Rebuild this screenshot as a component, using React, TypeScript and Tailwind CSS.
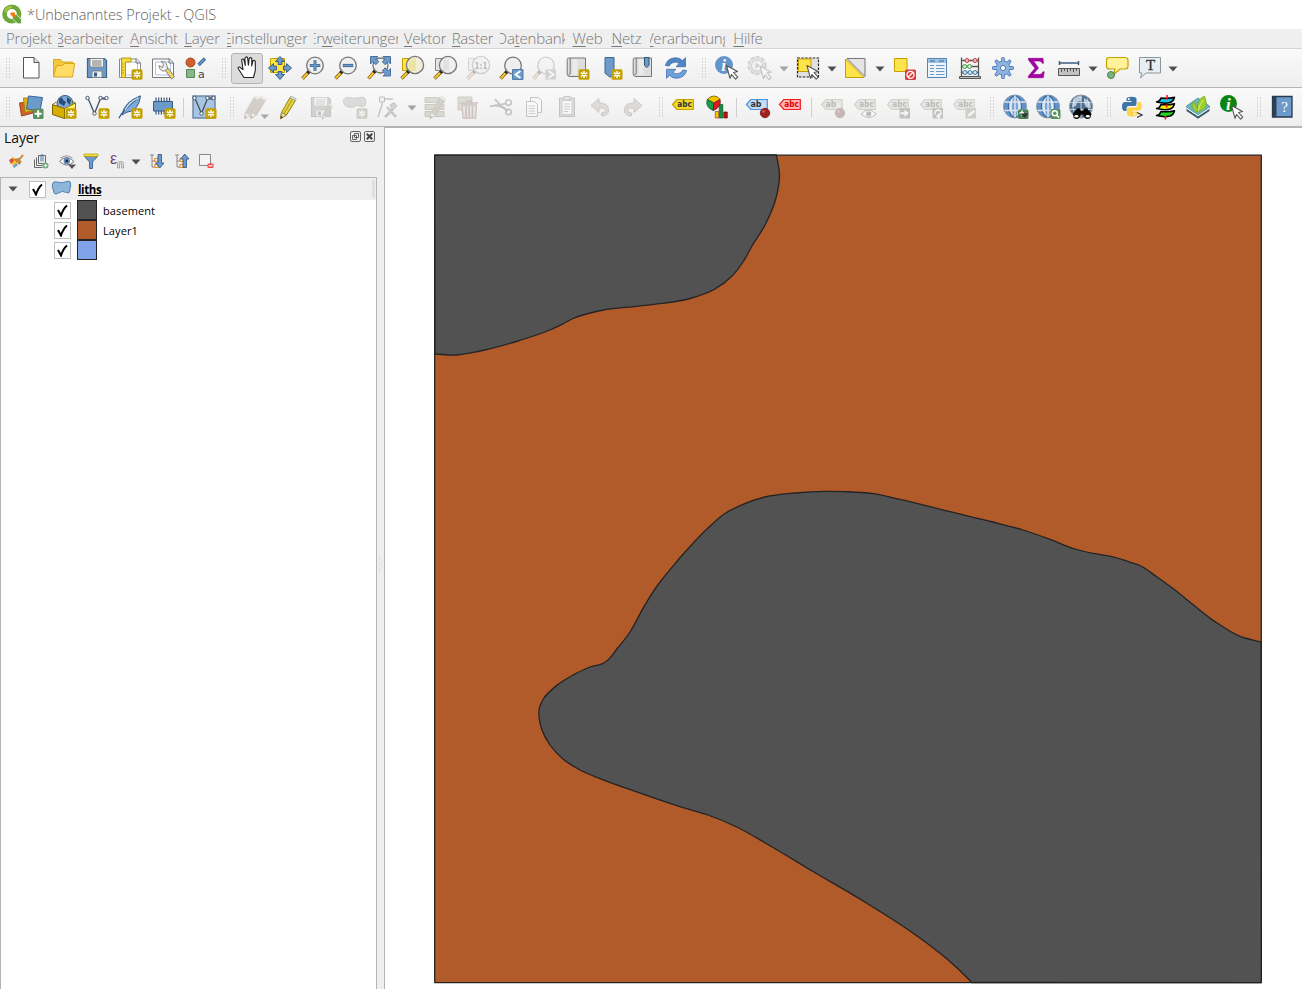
import React from "react";

type Point = [number, number];

/* ---------- shared icon parts ---------- */

function Icon({ children, faded = false }: { children: React.ReactNode; faded?: boolean }) {
  return (
    <svg
      viewBox="0 0 24 24"
      width="24"
      height="24"
      className={faded ? "shrink-0 overflow-visible opacity-30 saturate-50" : "shrink-0 overflow-visible"}
      fill="none"
    >
      {children}
    </svg>
  );
}

function NewBadge({ color = "#c4a000" }: { color?: string }) {
  return (
    <g transform="translate(13.5 13.2)">
      <rect width="11" height="10.6" rx="1.6" fill={color} />
      <path d="M5.5 1.8v7M2.4 3.5l6.2 3.6M8.6 3.5L2.4 7.1" stroke="#fff" strokeWidth="1.5" />
      <circle cx="5.5" cy="5.3" r="0.8" fill={color} />
    </g>
  );
}

function Lens({ fill = "#eeeeec", cx = 14, cy = 9.5, r = 8.3 }: { fill?: string; cx?: number; cy?: number; r?: number }) {
  const hx = cx - r * 0.7;
  const hy = cy + r * 0.7;
  return (
    <g>
      <path d={`M${hx} ${hy}L1.5 22.5`} stroke="#7a5c10" strokeWidth="3.4" />
      <path d={`M${hx} ${hy}L1.8 22.2`} stroke="#fcc62f" strokeWidth="2" />
      <path d={`M${hx + 1} ${hy - 1}l-2.8 2.8`} stroke="#222" strokeWidth="3.2" />
      <circle cx={cx} cy={cy} r={r} fill={fill} fillOpacity="0.88" stroke="#777" strokeWidth="1.3" />
    </g>
  );
}

function Cursor({ x = 13, y = 10 }: { x?: number; y?: number }) {
  return (
    <path
      transform={`translate(${x} ${y})`}
      d="M0 0l11 6-4 1 4.2 4.6-2 2L5 9 3.5 12.8z"
      fill="#fff"
      stroke="#555"
      strokeWidth="1.1"
      strokeLinejoin="round"
    />
  );
}

function Pencil({ fill = "#e8d43c", tip = "#5c4b12" }: { fill?: string; tip?: string }) {
  return (
    <g>
      <path d="M4.5 23.5l1-6L14 2.6l5.4 3L10.5 20z" fill={fill} stroke="#8f7d14" strokeWidth="1" />
      <path d="M8 18.6L16.5 4" stroke="#a5921c" strokeWidth="1" />
      <path d="M5.5 17.5l5 2.5-6 3.8z" fill="#e9dcb8" stroke="#807030" strokeWidth=".7" />
      <path d="M4.5 23.8l.5-3 2.2 1.4z" fill={tip} />
      <path d="M14 2.6l1-1.6 5.2 2.9-.9 1.7z" fill="#f3f3ee" stroke="#999" strokeWidth=".8" />
    </g>
  );
}

function Tag({ text = "abc", fill = "#f2d92c", stroke = "#c4a000", color = "#333" }: { text?: string; fill?: string; stroke?: string; color?: string }) {
  return (
    <g>
      <path d="M1.5 9.5L5.8 4.5h16.5v10H5.8z" fill={fill} stroke={stroke} strokeWidth="1.2" />
      <text x={text === "ab" ? 11 : 13.6} y="12.4" textAnchor="middle" fontSize="8.5" fontWeight="700" fontFamily="'DejaVu Sans', sans-serif" fill={color} textLength={text === "ab" ? 11 : 14.5} lengthAdjust="spacingAndGlyphs">
        {text}
      </text>
    </g>
  );
}

function FourWay() {
  return (
    <g fill="#6b9acb" stroke="#2f5379" strokeWidth=".9">
      <path d="M12 .5l4.5 5h-2.7v3h-3.6v-3H7.500z" />
      <path d="M12 23.500l4.500-5h-2.700v-3h-3.600v3H7.500z" />
      <path d="M.5 12l5-4.500v2.700h3v3.600h-3v2.700z" />
      <path d="M23.500 12l-5-4.500v2.700h-3v3.600h3v2.700z" />
    </g>
  );
}

function Globe({ gray = false }: { gray?: boolean }) {
  return (
    <g>
      <circle cx="12" cy="11.500" r="11.500" fill={gray ? "#54708f" : "#5f93cb"} stroke="#8d98a3" />
      {gray ? (
        <g>
          <path d="M4 5q5-6 9-3l-1 4-4 1-1 4-4 1zM15 3l6 4 1 6-5-1-2-4z" fill="#b5cade" />
          <path d="M6 3.500q-4 8 0 16M18 3.500q4 8 0 16M12 .5v22M1.500 7.500h21M1 14.500h22" stroke="#d9e4ee" strokeWidth=".8" />
        </g>
      ) : (
        <g>
          <ellipse cx="12" cy="11.500" rx="6.500" ry="10.500" fill="#e3eaf1" stroke="#3c6ea5" strokeWidth="1.300" />
          <ellipse cx="12" cy="11.500" rx="3.200" ry="10.500" fill="#78a6d8" />
          <path d="M12 .5v22M1.500 7h21M1.500 15.500h21" stroke="#dde5ed" strokeWidth="1.500" />
        </g>
      )}
    </g>
  );
}

function Parchment() {
  return (
    <g>
      <path d="M3.500 2h17v18.500H5q-2.800 0-2.800-2.600V3.600Q2.200 2 3.500 2z" fill="#dededc" stroke="#777" />
      <path d="M5.200 2v15q0 1.500-1.600 1.500" stroke="#777" />
      <path d="M7.500 3h5v16h-5z" fill="#f0f0ee" opacity=".7" />
    </g>
  );
}

function FloppyDisk({ fill = "#6f9bc9" }: { fill?: string }) {
  return (
    <g>
      <path d="M2.500 2.500h17l2 2v17h-19z" fill={fill} stroke="#3d668f" strokeWidth="1.200" />
      <path d="M5 2.500h13.500V11H5z" fill="#f4f4f2" stroke="#777" strokeWidth=".8" />
      <path d="M7 5h9.500M7 7h9.500M7 9h9.500" stroke="#666" strokeWidth=".9" />
      <path d="M7 15h10v6.500H7z" fill="#eeeeec" stroke="#777" strokeWidth=".8" />
      <path d="M9 16.500h3v4H9z" fill="#3c5f88" />
    </g>
  );
}

/* ---------- toolbar 1 icons ---------- */

const NewProject = () => (
  <Icon>
    <path d="M4.500 1.500h10.500l5 5v15.500H4.500z" fill="#fff" stroke="#555" />
    <path d="M15 1.500v5h5" fill="#ddd" stroke="#555" />
  </Icon>
);

const OpenProject = () => (
  <Icon>
    <path d="M1.500 20.500v-17h7l2 2.500h10v5" fill="#f5c93c" stroke="#d9a620" />
    <path d="M1.500 21L4.500 9.500h6l2-2h10.200L20.500 21z" fill="#ffdc66" stroke="#d9a620" />
  </Icon>
);

const SaveProject = () => <Icon><FloppyDisk /></Icon>;

const NewLayout = () => (
  <Icon>
    <path d="M1.500 3h17l4 3.800v14.700h-21z" fill="#fff" stroke="#888" />
    <path d="M5 6h14.500v13H5z" stroke="#a8c2e8" />
    <path d="M18 2.500v4.500h4.500" stroke="#777" />
    <path d="M3.500 2H13v4H7.500v15.500h-4z" fill="#f6db3e" stroke="#b99b10" />
    <path d="M4 8h2M4 11h2M4 14h2M4 17h2" stroke="#b99b10" />
    <NewBadge />
  </Icon>
);

const LayoutManager = () => (
  <Icon>
    <path d="M1.500 3h17l4 3.800v14.700h-21z" fill="#fff" stroke="#777" />
    <path d="M4.500 6h15v13h-15z" stroke="#a8c2e8" />
    <path d="M18 2.500v4.500h4.500" stroke="#777" />
    <path d="M14 14l6.500 9 3-2.300L17 12z" fill="#f0d568" stroke="#777" strokeWidth=".9" />
    <path d="M8 9.500l3.500 2 1-3.500-2.200-2.500q5-.5 5.700 4.500l.5 3-3 2q-5 .2-5.500-5.500z" fill="#eee" stroke="#777" strokeWidth=".9" />
  </Icon>
);

const StyleManager = () => (
  <Icon>
    <circle cx="6.500" cy="6.500" r="4.500" fill="#d35f2e" stroke="#a6431d" />
    <path d="M14.500 9L21 2.500" stroke="#3f6795" strokeWidth="3.300" />
    <path d="M14.500 9L21 2.500" stroke="#6b9acb" strokeWidth="1.500" />
    <path d="M2.500 13.500h8v8h-8z" fill="#8bb58b" stroke="#548a5a" />
    <text x="17.300" y="21.500" textAnchor="middle" fontSize="11" fontFamily="'DejaVu Sans', sans-serif" fill="#444">a</text>
  </Icon>
);

const PanHand = () => (
  <div className="flex h-[31px] w-[32px] shrink-0 items-center justify-center rounded-[3px] border border-[#b4b4b4] bg-[#dcdcdc]">
    <Icon>
      <path
        d="M9 21.500L3.300 12.800Q2.600 10.800 4.600 11l3.400 2.600L6.700 4.200Q7 2.300 8.800 3.400l1.500 6.100-.4-7.500q1.200-2 2.700-.3l.8 7.600.8-7q1.800-1.500 2.600.4l-.1 7.200L18 4.700q1.800-1 2.300.8v9.200l-1.800 6.800z"
        fill="#fff" stroke="#222" strokeWidth="1.100" strokeLinejoin="round"
      />
    </Icon>
  </div>
);

const PanSelection = () => (
  <Icon>
    <path d="M2.500 2.500h14v14h-14z" fill="#ffe34a" stroke="#c4a000" />
    <FourWay />
  </Icon>
);

const ZoomIn = () => (
  <Icon>
    <Lens cx={14} cy={9.500} />
    <path d="M14 4.300v10.400M8.800 9.500h10.400" stroke="#3c6694" strokeWidth="3" />
    <path d="M14 4.800v9.400M9.300 9.500h9.400" stroke="#6b9acb" strokeWidth="1.500" />
  </Icon>
);

const ZoomOut = () => (
  <Icon>
    <Lens cx={14} cy={9.500} />
    <path d="M8.800 9.500h10.400" stroke="#3c6694" strokeWidth="3.200" />
    <path d="M9.300 9.500h9.400" stroke="#6b9acb" strokeWidth="1.500" />
  </Icon>
);

const ZoomFull = () => (
  <Icon>
    <Lens cx={13.500} cy={9.500} r={7.500} />
    <g fill="#6b9acb" stroke="#3c6694" strokeWidth=".9">
      <path d="M3.500.5h7.500L8.700 2.800l3 3-2.900 2.900-3-3L3.500 8z" />
      <path d="M23.500.5V8l-2.300-2.300-3 3-2.900-2.900 3-3L16 .5z" />
      <path d="M23.500 20H16l2.300-2.300-3-3 2.900-2.900 3 3 2.300-2.300z" />
    </g>
  </Icon>
);

const ZoomSelection = () => (
  <Icon>
    <path d="M2.500 2.500h13v12h-13z" fill="#ffe34a" stroke="#c4a000" />
    <Lens fill="#f0edd0" cx={15} cy={9} r={8.600} />
    <path d="M9 4h6.500v10.500H9z" fill="#e6e08a" opacity=".55" />
  </Icon>
);

const ZoomLayer = () => (
  <Icon>
    <path d="M2.500 2.500h13v12h-13z" fill="#e4e4e4" stroke="#888" />
    <Lens cx={15} cy={9} r={8.600} />
    <path d="M10 4h5v10h-5z" fill="#d5d5d5" opacity=".5" />
  </Icon>
);

const ZoomNative = () => (
  <Icon faded>
    <path d="M2.500 2.500h13v12h-13z" fill="#e4e4e4" stroke="#888" />
    <Lens cx={15} cy={9} r={8.600} />
    <text x="15" y="12.500" textAnchor="middle" fontSize="9" fontWeight="700" fontFamily="'DejaVu Sans', sans-serif" fill="#333" textLength="13" lengthAdjust="spacingAndGlyphs">1:1</text>
  </Icon>
);

const ZoomLast = () => (
  <Icon>
    <Lens cx={14} cy={9.500} />
    <path d="M13.500 13.500H24v10H13.500z" fill="#6b9acb" stroke="#507ba8" />
    <path d="M21.500 15l-5 3.500 5 3.500" stroke="#fff" strokeWidth="2" />
  </Icon>
);

const ZoomNext = () => (
  <Icon faded>
    <Lens cx={14} cy={9.500} />
    <path d="M13.500 13.500H24v10H13.500z" fill="#888" />
    <path d="M16.500 15l5 3.500-5 3.500" stroke="#fff" strokeWidth="2" />
  </Icon>
);

const NewMapView = () => <Icon><Parchment /><NewBadge /></Icon>;

const NewBookmark = () => (
  <Icon>
    <path d="M7 1.500h9v17l-4 2.700-5-4z" fill="#6b9acb" stroke="#3c6694" />
    <NewBadge />
  </Icon>
);

const ShowBookmarks = () => (
  <Icon>
    <Parchment />
    <path d="M13.500 1.500H18v7.800l-2.200 2.200-2.300-2.200z" fill="#6b9acb" stroke="#2f5379" />
  </Icon>
);

const Refresh = () => (
  <Icon>
    <path d="M1.500 9.500Q3 2.500 11 1.800q4.500-.3 7.500 2.700l3-2.800v9H12l3.300-3.200Q12 5 8 7q-2 1-2.800 3z" fill="#4e86c8" stroke="#2f65a5" strokeWidth=".7" />
    <path d="M22.500 14.500Q21 21.500 13 22.200q-4.500.3-7.500-2.700l-3 2.800v-9H12l-3.300 3.200Q12 19 16 17q2-1 2.800-3z" fill="#6ea1da" stroke="#2f65a5" strokeWidth=".7" />
  </Icon>
);

const Identify = () => (
  <Icon>
    <circle cx="10" cy="9" r="9" fill="#6394cb" />
    <text x="9.500" y="15" textAnchor="middle" fontSize="17" fontStyle="italic" fontWeight="700" fontFamily="'Liberation Serif', serif" fill="#fff">i</text>
    <Cursor x={12.500} y={9.500} />
  </Icon>
);

const RunAction = () => (
  <Icon faded>
    <circle cx="10" cy="9.500" r="8.500" fill="#bbb" stroke="#888" strokeWidth="2.200" strokeDasharray="4 1.500" />
    <circle cx="10" cy="9.500" r="5.500" fill="#eee" stroke="#777" />
    <path d="M8.500 6.500l4.500 3-4.500 3z" fill="#777" />
    <Cursor x={13} y={10} />
  </Icon>
);

const SelectFeatures = () => (
  <Icon>
    <path d="M1.500 2h21v19h-21z" fill="#e1e1e1" stroke="#222" strokeWidth="1.200" strokeDasharray="2.500 1.300" />
    <path d="M2.500 3h12.500v12.500H2.500z" fill="#ffe34a" stroke="#c4a000" />
    <Cursor x={11} y={9.500} />
  </Icon>
);

const SelectByValue = () => (
  <Icon>
    <path d="M4 2.500h18v18z" fill="#e4e4e4" stroke="#777" />
    <path d="M2.500 3v18.500H21z" fill="#ffe34a" stroke="#c4a000" />
  </Icon>
);

const Deselect = () => (
  <Icon>
    <path d="M2.500 2.500h12.500v13H2.500z" fill="#ffe34a" stroke="#c4a000" />
    <rect x="13" y="13.500" width="11" height="10.500" rx="1.500" fill="#dc3b42" />
    <circle cx="18.500" cy="18.800" r="3.500" stroke="#fff" strokeWidth="1.300" />
    <path d="M16 21.300l5-5" stroke="#fff" strokeWidth="1.300" />
  </Icon>
);

const AttributeTable = () => (
  <Icon>
    <path d="M2.500 2.500h19v19h-19z" fill="#eef4fa" stroke="#5684b5" />
    <path d="M3 3h18v4H3z" fill="#9cc2e6" />
    <path d="M5 5h5M14 5h5" stroke="#3c6694" strokeWidth="1.200" />
    <path d="M5 9.500h4M11 9.500h8.500M5 12.500h4M11 12.500h8.500M5 15.500h4M11 15.500h8.500M5 18.500h4M11 18.500h8.500" stroke="#6b9acb" strokeWidth="1.200" />
  </Icon>
);

const Calculator = () => (
  <Icon>
    <path d="M3.500 1.500V21M20.500 1.500V21M3 4.500h18M3 10.500h18M3 16.500h18" stroke="#555" strokeWidth="1.300" />
    <path d="M1.500 20.500h21v2h-21z" fill="#bbb" stroke="#555" />
    <circle cx="9" cy="4.500" r="2" fill="#f3bcbc" stroke="#c83737" />
    <circle cx="17" cy="4.500" r="2" fill="#f3bcbc" stroke="#c83737" />
    <circle cx="6.700" cy="10.500" r="2" fill="#cdebcf" stroke="#48a050" />
    <circle cx="11.500" cy="10.500" r="2" fill="#cdebcf" stroke="#48a050" />
    <circle cx="7" cy="16.500" r="2" fill="#d0e4f4" stroke="#3f7dab" />
    <circle cx="12" cy="16.500" r="2" fill="#d0e4f4" stroke="#3f7dab" />
    <circle cx="17" cy="16.500" r="2" fill="#d0e4f4" stroke="#3f7dab" />
  </Icon>
);

const Toolbox = () => (
  <Icon>
    <g stroke="#4a7fbd" strokeWidth="3.800" strokeLinecap="round">
      <path d="M12 2.800v18.400M2.800 12h18.400M5.500 5.500l13 13M18.500 5.500l-13 13" />
    </g>
    <circle cx="12" cy="12" r="7" fill="#8fb3de" stroke="#4a7fbd" />
    <g stroke="#8fb3de" strokeWidth="2" strokeLinecap="round">
      <path d="M12 2.800v18.400M2.800 12h18.400M5.500 5.500l13 13M18.500 5.500l-13 13" />
    </g>
    <circle cx="12" cy="12" r="2.600" fill="#f5f5f5" stroke="#4a7fbd" />
  </Icon>
);

const Statistics = () => (
  <Icon>
    <path d="M4.500 2.300h14.500l.4 5h-1.200q-.5-2.300-3.200-2.300H9.500l5 7-5.700 6.500h6.700q2.700 0 3.500-2.700h1.200l-1 5.900H4.300v-1.500l6.700-7.900L4.500 4z" fill="#a800a8" stroke="#7d007d" strokeWidth=".6" />
  </Icon>
);

const Measure = () => (
  <Icon>
    <path d="M2.500 7h19M2.500 5v4M21.500 5v4" stroke="#3c5f80" strokeWidth="1.500" />
    <path d="M1.500 12.500h21v7h-21z" fill="#c2c2c2" stroke="#555" />
    <path d="M4.500 13v3M7.500 13v2M10.500 13v3M13.500 13v2M16.500 13v3M19.500 13v2" stroke="#555" />
  </Icon>
);

const MapTips = () => (
  <Icon>
    <path d="M4 1.500h16q3 0 3 3V10q0 3-3 3h-5l-6.500 5.500L10 13H4.500q-3 0-3-3V4.500q0-3 2.500-3z" fill="#fff299" stroke="#c4a000" strokeWidth="1.200" />
    <circle cx="6" cy="19" r="3.500" fill="#7db27d" stroke="#4b8450" />
  </Icon>
);

const Annotation = () => (
  <Icon>
    <path d="M1.500 1.500h21V17H8l-5.500 5 1.500-5H1.500z" fill="#e6eff3" stroke="#8c979c" />
    <text x="12.500" y="14" textAnchor="middle" fontSize="15" fontFamily="'Liberation Serif', serif" fill="#333" stroke="#333" strokeWidth=".3">T</text>
  </Icon>
);

/* ---------- toolbar 2 icons ---------- */

const DataSource = () => (
  <Icon>
    <path d="M.5 8l11-1.500L14 18 2.500 21z" fill="#d3622a" stroke="#9d431a" />
    <path d="M4.500 3l11.500 0 1 12-11 2.500z" fill="#e2b80c" stroke="#a38306" />
    <path d="M9.500 1l14 1.500-2.500 13.500L7.500 14z" fill="#6b9acb" stroke="#3c6694" />
    <rect x="14" y="13.500" width="10.500" height="10.500" rx="1.500" fill="#5b8f62" />
    <path d="M19.200 15.300v7M15.700 18.800h7" stroke="#fff" strokeWidth="2" />
  </Icon>
);

const NewGeoPackage = () => (
  <Icon>
    <circle cx="13" cy="8.500" r="8" fill="#7fa8d4" stroke="#345b88" />
    <path d="M7 4q4-3 4 1l3 2-2 4-5-3zM15 2l4 3-1 5-3-3z" fill="#294c75" />
    <path d="M.5 9.500l12 4v10L.5 19.500z" fill="#d9ad00" stroke="#7c6400" />
    <path d="M12.500 13.500L23.500 8v10l-11 5.500z" fill="#fff06a" stroke="#8c7400" />
    <path d="M.5 9.500L4.500 7M23.500 8L20 6.500" stroke="#8c7400" />
    <NewBadge />
  </Icon>
);

const VectorNodes = () => (
  <g stroke="#44586c">
    <path d="M3.500 4.500L9.500 18.500L15.500 3.500L21 4" strokeWidth="1.400" />
    <path d="M1 2l3 3M15 3h7" strokeWidth="1" />
    <circle cx="2.500" cy="3" r="1.700" fill="#fff" strokeWidth="1" />
    <circle cx="9.500" cy="18.500" r="1.700" fill="#fff" strokeWidth="1" />
    <circle cx="15.500" cy="3" r="1.700" fill="#fff" strokeWidth="1" />
    <circle cx="21.500" cy="3" r="1.700" fill="#fff" strokeWidth="1" />
  </g>
);

const NewShapefile = () => <Icon><VectorNodes /><NewBadge /></Icon>;

const NewSpatialite = () => (
  <Icon>
    <path d="M4 20Q6 7 22.500 .8 21 16 8 17.500z" fill="#7fabd8" stroke="#345b88" />
    <path d="M.8 23.200Q5 15 19 4" stroke="#345b88" strokeWidth="1.200" />
    <path d="M7 15Q12 7 20 3" stroke="#cfe0f1" strokeWidth="1.200" />
    <NewBadge />
  </Icon>
);

const NewMemoryLayer = () => (
  <Icon>
    <path d="M5 2.500v17M7.700 2.500v17M10.400 2.500v17M13.100 2.500v17M15.800 2.500v17M18.500 2.500v17" stroke="#3c5575" strokeWidth="1.200" />
    <path d="M2.500 6.500h19v9.500h-19z" fill="#6b9acb" stroke="#345b88" />
    <NewBadge />
  </Icon>
);

const NewVirtualLayer = () => (
  <Icon>
    <rect x="1" y="1" width="22" height="22" fill="#a9c4e0" stroke="#6684a5" strokeWidth="1.400" />
    <VectorNodes />
    <NewBadge />
  </Icon>
);

const CurrentEdits = () => (
  <Icon faded>
    <g transform="translate(-4 0)"><Pencil fill="#8b6f6f" /></g>
    <g transform="translate(2 0)"><Pencil fill="#8b6f6f" /></g>
    <path d="M16.500 19.500h8.500l-4.300 4.500z" fill="#000" />
  </Icon>
);

const ToggleEditing = () => <Icon><g transform="translate(-1 0)"><Pencil /></g></Icon>;

const SaveEdits = () => (
  <Icon faded>
    <g transform="translate(-1 0)"><FloppyDisk fill="#888" /></g>
    <g transform="translate(9 8) scale(.68)"><Pencil fill="#8b6f6f" /></g>
  </Icon>
);

const AddPolygon = () => (
  <Icon faded>
    <path d="M.5 6.500Q.5 2 6.500 2.500q5 1.500 9 .3 7-2.300 7.500 3.900-.5 6.500-6 4.500-3.500-2-6.500.8Q1 13.500 .5 6.500z" fill="#9aa39a" stroke="#667066" />
    <NewBadge color="#8a7d45" />
  </Icon>
);

const VertexTool = () => (
  <Icon faded>
    <path d="M6 4v6L2 22M6 4h11" stroke="#555" strokeWidth="1.400" />
    <path d="M3.500 2h5v5h-5z" fill="#ddd" stroke="#444" />
    <path d="M9 22l8-8M11 12l9 10" stroke="#6b6355" strokeWidth="2.600" />
    <path d="M14 10l4-2.500 3 3.500-4 4z" fill="#888" stroke="#555" />
  </Icon>
);

const ModifyAttributes = () => (
  <Icon faded>
    <path d="M2 2.500h19v5H2zM2 9.500h19v5H2zM2 16.500h19v5H2z" fill="#9ba273" stroke="#6a7048" />
    <g transform="translate(2.500 0)"><Pencil fill="#8b6f6f" /></g>
  </Icon>
);

const DeleteSelected = () => (
  <Icon faded>
    <path d="M2 2h14v13H2z" fill="#a8a27a" stroke="#77704a" />
    <path d="M6 10h14.500l-1 13H7z" fill="#e6c5c5" stroke="#9c4848" strokeWidth="1.300" />
    <path d="M4 8h18M10 6h6M10 11v11M13.200 11v11M16.500 11v11" stroke="#9c4848" strokeWidth="1.600" />
  </Icon>
);

const Cut = () => (
  <Icon faded>
    <path d="M1 11.500Q9 8.500 19 16M1 11.500l16-3M6 4q4 6 11 10" stroke="#555" strokeWidth="1.700" />
    <circle cx="19.500" cy="7.500" r="2.800" stroke="#555" strokeWidth="1.500" />
    <circle cx="19.500" cy="17" r="2.800" stroke="#555" strokeWidth="1.500" />
  </Icon>
);

const Copy = () => (
  <Icon faded>
    <path d="M8.500 2.500h8l3 3v12h-11z" fill="#fff" stroke="#555" />
    <path d="M4.500 6.500h8l3 3v12h-11z" fill="#fff" stroke="#555" />
    <path d="M6.500 11h6.500M6.500 13.500h6.500M6.500 16h6.500M6.500 18.500h6.500" stroke="#777" />
  </Icon>
);

const Paste = () => (
  <Icon faded>
    <path d="M4.500 3h15v18.500h-15z" fill="#b3ab98" stroke="#555" />
    <path d="M7 5.500h10v14H7z" fill="#fff" stroke="#777" />
    <path d="M9 1.500h6V5H9z" fill="#ccc" stroke="#555" />
    <path d="M9 9h6M9 11.500h6M9 14h6M9 16.500h4" stroke="#777" />
  </Icon>
);

const UndoShape = () => (
  <path d="M3 10.500L11 3.500v4.500q10-.5 9.500 8Q20 21 13.500 21v-3q4 0 4-3 0-2.500-6.500-2v4.500z" fill="#b0a28f" stroke="#776653" />
);

const Undo = () => <Icon faded><UndoShape /></Icon>;
const Redo = () => <Icon faded><g transform="translate(24 0) scale(-1 1)"><UndoShape /></g></Icon>;

const LabelLayer = () => <Icon><Tag /></Icon>;

const Diagram = () => (
  <Icon>
    <g transform="translate(.8 0)">
      <path d="M9 8L2.500 4.500Q5 1 9 1q4 0 6.500 3.500z" fill="#f0c400" stroke="#6b5a00" strokeWidth=".8" />
      <path d="M9 8L2.500 4.500Q0 12 8.500 15.500z" fill="#169c4b" stroke="#0a5527" strokeWidth=".8" />
      <path d="M9 8l6.200-3.500Q17 12 8.500 15.500z" fill="#e01b1b" stroke="#801010" strokeWidth=".8" />
      <path d="M10.500 16.500h3.500V23h-3.500z" fill="#f3c900" stroke="#a33" strokeWidth=".7" />
      <path d="M14.500 9.500H18V23h-3.500z" fill="#168a40" stroke="#0a5527" strokeWidth=".7" />
      <path d="M19 17h3.500v6H19z" fill="#b21616" stroke="#700" strokeWidth=".7" />
    </g>
  </Icon>
);

const PinMark = () => (
  <g>
    <path d="M18.500 8v9" stroke="#ddd" strokeWidth="2.600" />
    <circle cx="20" cy="18" r="4.700" fill="#a22020" stroke="#6f1515" strokeWidth=".8" />
    <circle cx="18.500" cy="16.500" r="1.300" fill="#d06060" />
  </g>
);

const PinHighlight = () => <Icon><Tag text="ab" fill="#bfdcfa" stroke="#4c93dd" /><PinMark /></Icon>;
const UnplacedLabels = () => <Icon><Tag fill="#ffb3b3" stroke="#f21c1c" color="#e00000" /></Icon>;
const PinLabels = () => <Icon faded><Tag text="ab" fill="#c6c6a0" stroke="#8a8a62" /><PinMark /></Icon>;

const ShowHideLabels = () => (
  <Icon faded>
    <Tag fill="#c6c6a0" stroke="#8a8a62" />
    <path d="M8 19q7.500-8 15.500 0-7.500 7-15.500 0z" fill="#fff" stroke="#444" />
    <circle cx="15.700" cy="18.800" r="2.600" fill="#444" />
  </Icon>
);

const MoveLabel = () => (
  <Icon faded>
    <Tag fill="#c6c6a0" stroke="#8a8a62" />
    <path d="M13.500 13h10.500v10.500H13.500z" fill="#555" />
    <path d="M14.500 17.300h4v-2.800l4.500 3.800-4.500 3.800v-2.800h-4z" fill="#fff" />
  </Icon>
);

const RotateLabel = () => (
  <Icon faded>
    <Tag fill="#c6c6a0" stroke="#8a8a62" />
    <path d="M13.500 13h10.500v10.500H13.500z" fill="#555" />
    <path d="M16 19.500q-.5-4 3-4.500 3.500.5 3 4-1 2.500-3.500 2.500M20.500 18.500l-2.500 3 3 1.500" stroke="#fff" strokeWidth="1.400" />
  </Icon>
);

const ChangeLabel = () => (
  <Icon faded>
    <Tag fill="#c6c6a0" stroke="#8a8a62" />
    <path d="M13.500 13h10.500v10.500H13.500z" fill="#857d5c" />
    <path d="M15.500 22l1-3 5-4 1.500 2-5 4z" fill="#fff" />
  </Icon>
);

const GlobeAdd = () => (
  <Icon>
    <Globe />
    <rect x="15" y="14.500" width="10.500" height="9.500" rx="1.500" fill="#4c8057" />
    <path d="M19 15.500v5M16.500 18H21" stroke="#fff" strokeWidth="1.500" />
    <path d="M17.500 18.500h8l-4 4.500z" fill="#333" />
  </Icon>
);

const GlobeSearch = () => (
  <Icon>
    <Globe />
    <rect x="14.500" y="14" width="10" height="10" rx="1.500" fill="#5b8f62" />
    <circle cx="18.800" cy="18.300" r="2.500" stroke="#fff" strokeWidth="1.400" />
    <path d="M20.700 20.300l2.300 2.300" stroke="#fff" strokeWidth="1.500" />
  </Icon>
);

const MetaSearch = () => (
  <Icon>
    <Globe gray />
    <path d="M4 18.500l4-5h3l1 2.500h2l1-2.500h3l4.500 5-1 4q-3 3-6 0l-1.500-3h-2l-1.500 3q-3 3-6 0z" fill="#050505" />
    <ellipse cx="7.400" cy="21.200" rx="2" ry="1.300" fill="#fff" />
    <ellipse cx="18.800" cy="21.200" rx="2" ry="1.300" fill="#fff" />
  </Icon>
);

const Python = () => (
  <Icon>
    <path d="M6.500 6V4q0-2.200 5-2.200T16.500 4v5q0 2-2.200 2H9q-2.500 0-2.500 3v2H4.500Q2 15.500 2 11.500 2 7 5 7h6.500V6z" fill="#3f74a6" />
    <circle cx="8.800" cy="4" r="1" fill="#fff" />
    <path d="M17.500 7h2.200q2 .7 2 4.500 0 4-2.700 4h-6.500v1H17v2.500q0 2.500-5 2.500-5 0-5-2.500v-4.500q0-2 2.200-2h5.600q2.700 0 2.700-3z" fill="#ffd343" />
    <circle cx="14.500" cy="19" r=".9" fill="#fff" />
    <path d="M17 17.500l5 2.500-5 2.500" stroke="#333" strokeWidth="1.300" />
  </Icon>
);

const GeoPlugin = () => (
  <Icon>
    <g transform="translate(1 0)" strokeLinejoin="round">
      <path d="M2.500 7q3.500-.5 4.500-4 7 1 13.500-.8-1 4-4.500 5.300Q10.500 9 2.500 7z" fill="#16c5e8" stroke="#000" strokeWidth="1.500" />
      <path d="M2.500 13.500q3.500-.5 4.500-4 7 1 13.500-.8-1 4-4.500 5.300-5.500 1.500-13.500-.5z" fill="#f5ed14" stroke="#000" strokeWidth="1.500" />
      <path d="M2.500 20.500q3.500-.5 4.500-4 7 1 13.500-.8-1 4-4.500 5.300-5.500 1.500-13.500-.5z" fill="#22d622" stroke="#000" strokeWidth="1.500" />
      <path d="M13 0v5M13 9.500l-.5 3M11.500 21v3.500" stroke="#ff1414" strokeWidth="1.600" />
    </g>
  </Icon>
);

const LeafPlugin = () => (
  <Icon>
    <path d="M.5 13.500L12 21l11.500-7.500v2.500L12 23.800.5 16z" fill="#3b5e70" />
    <path d="M.5 11L12 3l11.500 8v1.500L12 20.200.5 12.500z" fill="#6ab4bb" stroke="#4c8f97" strokeWidth=".8" />
    <path d="M.5 13.200L12 20.800l11.500-7.600" stroke="#fff" strokeWidth="1" />
    <path d="M10.500 17Q5 13.500 6.500 7q5 2 5 9.500Q10.500 4 18.500 1 24 14 12.500 16.500z" fill="#9ed02c" stroke="#79a91c" strokeWidth=".7" />
    <path d="M12 16q1-6 5.500-11.500" stroke="#d8ee94" strokeWidth="1" />
  </Icon>
);

const InfoPlugin = () => (
  <Icon>
    <circle cx="9.500" cy="8.500" r="8.500" fill="#0c8414" />
    <text x="9.300" y="14.500" textAnchor="middle" fontSize="17" fontStyle="italic" fontWeight="700" fontFamily="'Liberation Serif', serif" fill="#fff">i</text>
    <Cursor x={12.500} y={10.500} />
  </Icon>
);

const Help = () => (
  <Icon>
    <path d="M2.500 1.500h19.500v20.500H2.500z" fill="#6b9acb" stroke="#26384c" strokeWidth="1.300" />
    <path d="M2.500 1.500h4v20.500h-4z" fill="#2d4056" />
    <text x="14.500" y="17" textAnchor="middle" fontSize="15" fontFamily="'Liberation Serif', serif" fill="#fff">?</text>
  </Icon>
);

/* ---------- toolbar layout parts ---------- */

const Slot = ({ children }: { children: React.ReactNode }) => (
  <div className="flex h-full w-[33px] shrink-0 items-center justify-center">{children}</div>
);

const Slots = ({ icons }: { icons: React.ComponentType[] }) => (
  <>
    {icons.map((Item, i) => (
      <Slot key={i}><Item /></Slot>
    ))}
  </>
);

const Handle = ({ className }: { className: string }) => (
  <div className={`flex shrink-0 ${className}`}>
    <svg width="5" height="20" viewBox="0 0 5 20">
      <path d="M.5 .5v19M3.500 .5v19" stroke="#b9b9b9" strokeDasharray="1 2" />
    </svg>
  </div>
);

const Arrow = ({ className, light = false }: { className: string; light?: boolean }) => (
  <div className={`flex shrink-0 justify-center pt-[2px] ${className}`}>
    <svg width="10" height="6" viewBox="0 0 10 6">
      <path d="M.5.500h9L5 5.500z" fill={light ? "#a3a3a3" : "#505050"} />
    </svg>
  </div>
);

const Separator = ({ className }: { className: string }) => (
  <div className={`flex shrink-0 justify-center ${className}`}>
    <div className="h-[19px] w-px bg-[#cfcfcf]" />
  </div>
);

/* ---------- menu ---------- */

const menus: { pre: string; key: string; post: string; cls: string }[] = [
  { pre: "Pro", key: "j", post: "ekt", cls: "w-[46px] mr-[6px]" },
  { pre: "", key: "B", post: "earbeiten", cls: "w-[65px] mr-[7px]" },
  { pre: "", key: "A", post: "nsicht", cls: "w-[48px] mr-[6px]" },
  { pre: "", key: "L", post: "ayer", cls: "w-[36px] mr-[7px]" },
  { pre: "", key: "E", post: "instellungen", cls: "w-[80px] mr-[7px]" },
  { pre: "Er", key: "w", post: "eiterungen", cls: "w-[84px] mr-[6px]" },
  { pre: "", key: "V", post: "ektor", cls: "w-[42px] mr-[6px]" },
  { pre: "", key: "R", post: "aster", cls: "w-[41px] mr-[7px]" },
  { pre: "Da", key: "t", post: "enbank", cls: "w-[65px] mr-[7px]" },
  { pre: "", key: "W", post: "eb", cls: "w-[31px] mr-[8px]" },
  { pre: "", key: "N", post: "etz", cls: "w-[31px] mr-[8px]" },
  { pre: "", key: "V", post: "erarbeitung", cls: "w-[75px] mr-[7px]" },
  { pre: "", key: "H", post: "ilfe", cls: "w-[32px]" },
];

function MenuBar() {
  return (
    <nav className="flex h-[20px] shrink-0 items-center border-b border-[#d5d5d5] bg-[#efefef] pl-[6px] text-[15px] leading-[19px] font-light tracking-[-0.200px] text-[#777]">
      {menus.map((m, i) => (
        <div key={i} className={`flex shrink-0 justify-center overflow-hidden whitespace-nowrap ${m.cls}`}>
          <span className="shrink-0">
            {m.pre}
            <span className="underline decoration-1 underline-offset-2">{m.key}</span>
            {m.post}
          </span>
        </div>
      ))}
    </nav>
  );
}

/* ---------- layer panel ---------- */

const PanelIcon = ({ children, className }: { children: React.ReactNode; className: string }) => (
  <svg viewBox="0 0 16 16" width="16" height="16" fill="none" className={`shrink-0 overflow-visible ${className}`}>
    {children}
  </svg>
);

const TreeMark = () => (
  <g>
    <path d="M1 2h4M3 2v12h3M3 8h3" stroke="#888" />
    <path d="M6 5.500h3v3H6zM6 11.500h3v3H6z" fill="#fff" stroke="#f28b1c" strokeWidth="1.200" />
  </g>
);

function PanelToolbar() {
  return (
    <div className="flex h-[28px] items-center pb-[5px] pl-[8px]">
      <PanelIcon className="mr-[9px]">
        <path d="M1 7l4-3 5 3-1 6-3 2z" fill="#f3c63a" />
        <path d="M1 7l4-2 1 3-3 3z" fill="#e24b3f" />
        <path d="M5 13l3-3 2 2-4 3z" fill="#6aa0dc" />
        <path d="M6.500 6.500l5 5 1.500-3-2.500-3z" fill="#cc8a3c" stroke="#a56826" strokeWidth=".7" />
        <path d="M10.500 7.500L15 1.800" stroke="#c98a43" strokeWidth="2" />
      </PanelIcon>
      <PanelIcon className="mr-[10px]">
        <path d="M1.500 6.500v8h8M3.500 4.500v8h8M5.500 2.500h7v8h-7z" stroke="#666" />
        <path d="M8 8.500V2.500q1-2.500 2 0v6" stroke="#4b79aa" />
        <circle cx="12.500" cy="12.500" r="3" fill="#70a878" />
        <path d="M12.500 10.800v3.500M10.800 12.500h3.500" stroke="#fff" />
      </PanelIcon>
      <PanelIcon className="mr-[8px]">
        <path d="M.5 8.500q7-8 14.500 0-7 7-14.500 0z" fill="#fff" stroke="#777" />
        <path d="M1 5.500q6-5 12.500-.5" stroke="#999" />
        <circle cx="7.800" cy="8" r="3.200" fill="#5d88b3" />
        <circle cx="7.800" cy="8" r="1.300" fill="#222" />
        <path d="M9 11.500h8L13 16z" fill="#555" />
      </PanelIcon>
      <PanelIcon className="mr-[10px]">
        <path d="M1.500 3.500h13L9.500 9v6.500h-3V9z" fill="#6b9acb" stroke="#416c98" />
        <path d="M1 1h14v2.500H1z" fill="#f5dc3e" stroke="#b29b1a" strokeWidth=".7" />
      </PanelIcon>
      <PanelIcon className="mr-[5px]">
        <text x="4.500" y="11" textAnchor="middle" fontSize="16" fontFamily="'Liberation Sans', sans-serif" fill="#764a73">ε</text>
        <path d="M8.500 15V10.500q0-2 2.500-2h1q2.500 0 2.500 2V15h-2v-4.500h-2V15z" fill="#ddd" stroke="#999" strokeWidth=".8" />
      </PanelIcon>
      <Arrow className="mr-[7px] w-[12px]" />
      <PanelIcon className="mr-[9px]">
        <TreeMark />
        <path d="M9 1.500h3.500V10H15l-4.200 5L6.500 10H9z" fill="#6b9acb" stroke="#355e8c" strokeWidth=".9" />
      </PanelIcon>
      <PanelIcon className="mr-[8px]">
        <TreeMark />
        <path d="M9 14.500h3.500V6H15l-4.200-5L6.500 6H9z" fill="#6b9acb" stroke="#355e8c" strokeWidth=".9" />
      </PanelIcon>
      <PanelIcon className="">
        <path d="M1.500 1.500h11v11h-11z" fill="#f4f4f4" stroke="#888" />
        <rect x="9.500" y="10.500" width="6" height="4.500" rx="1" fill="#f04a50" />
        <path d="M10.500 12.800h4" stroke="#fff" strokeWidth="1.200" />
      </PanelIcon>
    </div>
  );
}

const Checkbox = () => (
  <div className="flex size-[17px] shrink-0 items-center justify-center border border-[#bfbfbf] bg-white">
    <svg width="13" height="13" viewBox="0 0 13 13" fill="none">
      <path d="M2 6l3 5.500Q7 5 11 1.500" stroke="#000" strokeWidth="2" />
    </svg>
  </div>
);

const categories = [
  { label: "basement", swatch: "bg-[#525252]" },
  { label: "Layer1", swatch: "bg-[#b15a2a]" },
  { label: "", swatch: "bg-[#81a3e8]" },
];

function LayerPanel() {
  return (
    <aside className="-mt-px flex w-[377px] shrink-0 flex-col bg-[#efefef]">
      <header className="flex h-[22px] items-center justify-between pr-[2px] pl-[4px]">
        <h2 className="text-[14px] leading-[20px] tracking-[-0.100px] text-[#111]">Layer</h2>
        <div className="flex gap-[3px] pb-[3px]">
          <svg width="11" height="11" viewBox="0 0 11 11" fill="none" stroke="#666">
            <rect x=".5" y=".5" width="10" height="10" rx="1.500" />
            <path d="M4.500 2.500h4v4h-4zM2.500 4.500h4v4h-4z" fill="#eee" />
          </svg>
          <svg width="11" height="11" viewBox="0 0 11 11" fill="none" stroke="#666">
            <rect x=".5" y=".5" width="10" height="10" rx="1.500" />
            <path d="M2.800 2.800l5.400 5.400M8.200 2.800L2.800 8.200" stroke="#444" strokeWidth="2" />
          </svg>
        </div>
      </header>
      <PanelToolbar />
      <div className="flex min-h-0 flex-1 flex-col border-t border-r border-l border-[#b5b5b5] bg-white text-[11px] text-black">
        <div className="flex h-[22px] shrink-0 items-center bg-[#efefef] pl-[7px]">
          <svg width="10" height="6" viewBox="0 0 10 6" className="mr-[11px]">
            <path d="M.5.500h9L5 5.500z" fill="#505050" />
          </svg>
          <Checkbox />
          <svg width="21" height="16" viewBox="0 0 21 16" className="mr-[6px] mb-[2px] ml-[5px]" fill="none">
            <path d="M1.500 4Q2 1 6 2q4.500 1.500 8 0 5-2 5.500 1 .5 3-.5 5.500 0 6-3.500 4-4.500-2.500-8 .5-5 3-5-3Q.5 7 1.500 4z" fill="#8cb6dc" stroke="#4f7fae" />
          </svg>
          <span className="pt-[1px] text-[11.500px] font-bold tracking-[-0.400px] underline underline-offset-1">liths</span>
          <div className="mr-[1px] ml-auto h-[18px] w-[3px] bg-[#e0e0e0]" />
        </div>
        {categories.map((c, i) => (
          <div key={i} className="flex h-[20px] shrink-0 items-center pl-[53px]">
            <Checkbox />
            <div className={`mr-[6px] ml-[6px] h-[20px] w-[20px] shrink-0 border border-[#232323] ${c.swatch}`} />
            <span className="pt-[2px] tracking-[0.100px]">{c.label}</span>
          </div>
        ))}
      </div>
    </aside>
  );
}

/* ---------- map ---------- */

const upperContact: Point[] = [
  [776.5, 155], [779.5, 175], [776, 198], [765, 225], [752, 246], [744, 260.5], [732, 276], [715, 289],
  [690, 298.500], [660, 303.700], [636, 306.300], [601, 310.500], [573, 318.500], [561, 324.800], [546, 331.500], [520, 340.300],
  [480, 351], [457, 355], [435, 354],
];

const lowerContact: Point[] = [
  [1261, 642], [1240, 636.300], [1215, 621.600], [1195, 606.300], [1173, 588.600], [1156, 576.300], [1140, 565.500], [1129, 561.800],
  [1112, 556.700], [1095, 553.700], [1075, 549], [1050, 539.300], [1023, 530], [993, 522], [950, 511.700], [900, 499.300],
  [873, 493.700], [845, 491.700], [825, 491.300], [795, 493], [765, 497], [743, 504.300], [725, 513.500], [708, 528],
  [690, 546.500], [670, 569.600], [655, 588.800], [643, 608.300], [630, 632], [617.300, 648.500], [606, 661.500], [602, 663.800],
  [590, 667], [575, 674], [558, 684.500], [543.300, 699], [539.700, 706.700], [539, 716.700], [542, 730], [550, 745],
  [563, 759], [580, 770], [600, 778.600], [636.700, 791.900], [680, 806.700], [708, 815], [736.700, 827], [770, 845.700],
  [813, 871.500], [863, 900.900], [910, 931], [940, 953.300], [960, 970.700], [971.700, 982.500],
];

const distance = (p: Point, q: Point) => Math.hypot(p[0] - q[0], p[1] - q[1]);

/** Chord-length weighted tangent at index i. */
function tangent(points: Point[], i: number): Point {
  const p = points[i];
  const a = points[i - 1];
  const c = points[i + 1];
  const slope = (m: Point, n: Point): Point => {
    const l = distance(m, n);
    return [(n[0] - m[0]) / l, (n[1] - m[1]) / l];
  };
  if (!a) return slope(p, c);
  if (!c) return slope(a, p);
  const la = distance(a, p);
  const lc = distance(p, c);
  const s = slope(a, p);
  const t = slope(p, c);
  const total = la + lc;
  return [(s[0] * lc + t[0] * la) / total, (s[1] * lc + t[1] * la) / total];
}

/** Smooth curve through the points, written as cubic Bézier segments. */
function spline(points: Point[]): string {
  let d = `M${points[0][0]} ${points[0][1]}`;
  for (let i = 0; i < points.length - 1; i++) {
    const b = points[i];
    const c = points[i + 1];
    const h = distance(b, c) / 3;
    const t0 = tangent(points, i);
    const t1 = tangent(points, i + 1);
    d += `C${b[0] + t0[0] * h} ${b[1] + t0[1] * h} ${c[0] - t1[0] * h} ${c[1] - t1[1] * h} ${c[0]} ${c[1]}`;
  }
  return d;
}

function MapCanvas() {
  return (
    <main className="min-w-0 flex-1 overflow-hidden border-l border-[#b5b5b5] bg-white">
      <svg viewBox="385 128 917 861" width="917" height="861" className="block" stroke="#232323" strokeWidth="1.300" strokeLinejoin="round">
        <path d="M434.700 155.200H1261.300V982.600H434.700z" fill="#b15a2a" />
        <path d={`${spline(upperContact)}L434.700 155.200z`} fill="#525252" />
        <path d={`${spline(lowerContact)}L1261.300 982.600z`} fill="#525252" />
      </svg>
    </main>
  );
}

/* ---------- window ---------- */

export default function App() {
  return (
    <div className="flex h-[989px] w-[1302px] flex-col overflow-hidden bg-[#efefef] font-['Open_Sans','Noto_Sans',sans-serif]">
      <div className="flex h-[29px] shrink-0 items-center bg-white pl-[2px]">
        <svg width="21" height="21" viewBox="0 0 21 21" fill="none" className="mr-[4px] mb-[1px]">
          <circle cx="9.800" cy="10" r="7.300" stroke="#6fa63a" strokeWidth="4.600" />
          <path d="M3 8Q5 3 10 2.800" stroke="#a3c43c" strokeWidth="2.500" />
          <path d="M10.500 10.500h4l5 5v4.300h-4l-5-5z" fill="#6aa339" stroke="#fff" strokeWidth=".7" />
          <path d="M8.500 8.500h4.500v4.500h-2L8.500 10.500z" fill="#ee7913" />
        </svg>
        <h1 className="text-[14.500px] font-light tracking-[-0.080px] whitespace-nowrap text-[#606060]">*Unbenanntes Projekt - QGIS</h1>
      </div>
      <MenuBar />

      <div className="flex h-[39px] shrink-0 items-center border-b border-[#b5b5b5] bg-linear-to-b from-[#fafafa] to-[#eeeeee]">
        <Handle className="w-[14.500px] pl-[6px]" />
        <Slots icons={[NewProject, OpenProject, SaveProject, NewLayout, LayoutManager, StyleManager]} />
        <Handle className="w-[18px] pl-[9.500px]" />
        <Slots
          icons={[
            PanHand, PanSelection, ZoomIn, ZoomOut, ZoomFull, ZoomSelection, ZoomLayer, ZoomNative,
            ZoomLast, ZoomNext, NewMapView, NewBookmark, ShowBookmarks, Refresh,
          ]}
        />
        <Handle className="w-[17px] pl-[9.500px]" />
        <Slots icons={[Identify, RunAction]} />
        <Arrow className="w-[16px]" light />
        <Slots icons={[SelectFeatures]} />
        <Arrow className="w-[14px]" />
        <Slots icons={[SelectByValue]} />
        <Arrow className="w-[16px]" />
        <Slots icons={[Deselect, AttributeTable, Calculator, Toolbox, Statistics, Measure]} />
        <Arrow className="w-[15px]" />
        <Slots icons={[MapTips, Annotation]} />
        <Arrow className="w-[13px]" />
      </div>

      <div className="flex h-[40px] shrink-0 items-center border-b-2 border-[#b5b5b5] bg-linear-to-b from-[#fafafa] to-[#eeeeee]">
        <Handle className="w-[14.500px] pl-[6px]" />
        <Slots icons={[DataSource, NewGeoPackage, NewShapefile, NewSpatialite, NewMemoryLayer]} />
        <Separator className="w-[8px]" />
        <Slots icons={[NewVirtualLayer]} />
        <Handle className="w-[19px] pl-[9.500px]" />
        <Slots icons={[CurrentEdits, ToggleEditing, SaveEdits, AddPolygon, VertexTool]} />
        <Arrow className="w-[14px]" light />
        <Slots icons={[ModifyAttributes, DeleteSelected, Cut, Copy, Paste, Undo, Redo]} />
        <Handle className="w-[17px] pl-[9.500px]" />
        <Slots icons={[LabelLayer, Diagram]} />
        <Separator className="w-[8px]" />
        <Slots icons={[PinHighlight, UnplacedLabels]} />
        <Separator className="w-[9px]" />
        <Slots icons={[PinLabels, ShowHideLabels, MoveLabel, RotateLabel, ChangeLabel]} />
        <Handle className="w-[18px] pl-[9.500px]" />
        <Slots icons={[GlobeAdd, GlobeSearch, MetaSearch]} />
        <Handle className="w-[18px] pl-[9.500px]" />
        <Slots icons={[Python, GeoPlugin, LeafPlugin, InfoPlugin]} />
        <Handle className="w-[18px] pl-[9.500px]" />
        <Slots icons={[Help]} />
      </div>

      <div className="flex min-h-0 flex-1">
        <LayerPanel />
        <div className="-mt-px flex w-[7px] shrink-0 items-center justify-center bg-[#efefef] pt-[12px]">
          <svg width="4" height="16" viewBox="0 0 4 16">
            <path d="M.5 0v16M3 1.500v14" stroke="#c9c9c9" strokeDasharray="1 2" />
          </svg>
        </div>
        <MapCanvas />
      </div>
    </div>
  );
}
